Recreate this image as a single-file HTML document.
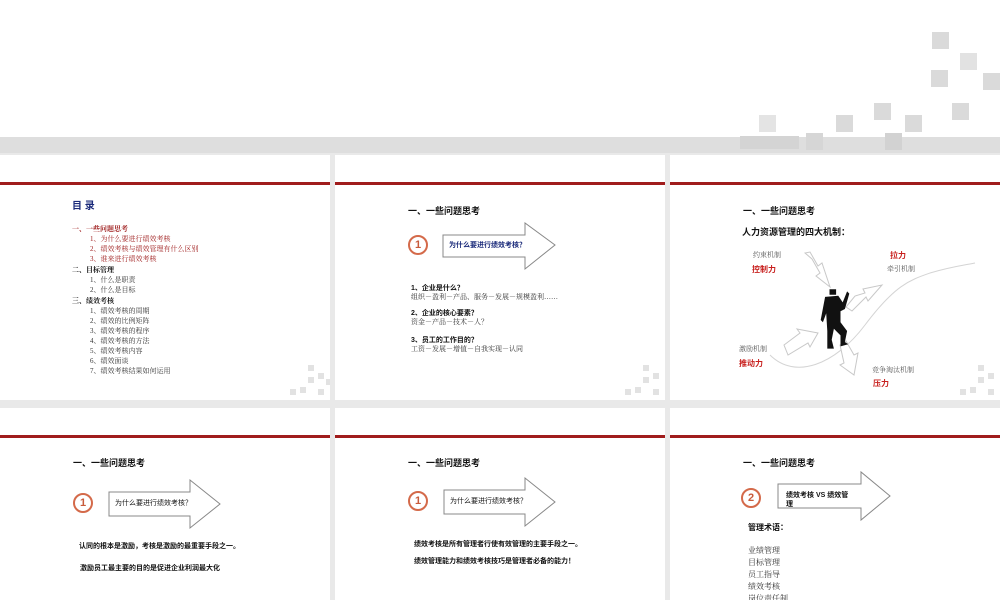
<!DOCTYPE html>
<html><head><meta charset="utf-8"><style>
*{margin:0;padding:0;box-sizing:border-box}
body{width:1000px;height:600px;overflow:hidden;background:#e9e9e9;position:relative;font-family:"Liberation Sans","Noto Sans CJK SC",sans-serif}
.a{position:absolute;white-space:nowrap;line-height:1}
.top{position:absolute;left:0;top:0;width:1000px;height:137px;background:#fff}
.band{position:absolute;left:0;top:137px;width:1000px;height:16px;background:#dedede}
.sl{position:absolute;background:#fff;overflow:hidden}
.red{position:absolute;left:0;width:100%;height:3px;background:#a01c1c}
.sq{position:absolute;width:17px;height:17px;background:#dadada}
.sm{position:absolute;width:6px;height:6px;background:#e2e2e2}
.h{font-weight:bold;font-size:9px;color:#111}
.s{font-family:"Liberation Serif","Noto Serif CJK SC",serif;font-size:7px;color:#333}
.b{font-weight:bold;font-size:7px;color:#111}
.r{color:#c8201e;font-weight:bold;font-size:8px}
.circ{position:absolute;width:20px;height:20px;border:2px solid #d46a4a;border-radius:50%;color:#c85a3a;font-weight:bold;font-size:11px;text-align:center;line-height:16px}
</style></head><body>
<div class="top"></div>
<div class="band"></div>
<div style="position:absolute;left:740px;top:136px;width:59px;height:13px;background:#d4d4d4"></div>
<div class="sq" style="left:932px;top:32px"></div>
<div class="sq" style="left:960px;top:53px;background:#e2e2e2"></div>
<div class="sq" style="left:931px;top:70px"></div>
<div class="sq" style="left:983px;top:73px"></div>
<div class="sq" style="left:874px;top:103px"></div>
<div class="sq" style="left:952px;top:103px"></div>
<div class="sq" style="left:759px;top:115px;background:#e4e4e4"></div>
<div class="sq" style="left:836px;top:115px"></div>
<div class="sq" style="left:905px;top:115px"></div>
<div class="sq" style="left:806px;top:133px;background:#d6d6d6"></div>
<div class="sq" style="left:885px;top:133px;background:#d2d2d2"></div>

<!-- slide 1 -->
<div class="sl" style="left:0;top:155px;width:330px;height:245px">
<div class="red" style="top:27px"></div>
<div class="a" style="left:72px;top:47px;font-weight:bold;font-size:10px;color:#1a2a7a">目 录</div>
<div class="a s" style="left:72px;top:71px;color:#a02020;font-weight:bold">一、一些问题思考</div>
<div class="a s" style="left:90px;top:81px;color:#a02020">1、为什么要进行绩效考核</div>
<div class="a s" style="left:90px;top:91px;color:#a02020">2、绩效考核与绩效管理有什么区别</div>
<div class="a s" style="left:90px;top:101px;color:#a02020">3、谁来进行绩效考核</div>
<div class="a s" style="left:72px;top:112px;font-weight:bold;color:#111">二、目标管理</div>
<div class="a s" style="left:90px;top:122px">1、什么是职责</div>
<div class="a s" style="left:90px;top:132px">2、什么是目标</div>
<div class="a s" style="left:72px;top:143px;font-weight:bold;color:#111">三、绩效考核</div>
<div class="a s" style="left:90px;top:153px">1、绩效考核的周期</div>
<div class="a s" style="left:90px;top:163px">2、绩效的比例矩阵</div>
<div class="a s" style="left:90px;top:173px">3、绩效考核的程序</div>
<div class="a s" style="left:90px;top:183px">4、绩效考核的方法</div>
<div class="a s" style="left:90px;top:193px">5、绩效考核内容</div>
<div class="a s" style="left:90px;top:203px">6、绩效面谈</div>
<div class="a s" style="left:90px;top:213px">7、绩效考核结果如何运用</div>
<div class="sm" style="left:308px;top:210px"></div><div class="sm" style="left:318px;top:218px"></div><div class="sm" style="left:308px;top:222px"></div><div class="sm" style="left:326px;top:224px"></div><div class="sm" style="left:290px;top:234px"></div><div class="sm" style="left:300px;top:232px"></div><div class="sm" style="left:318px;top:234px"></div>
</div>

<!-- slide 2 -->
<div class="sl" style="left:335px;top:155px;width:330px;height:245px">
<div class="red" style="top:27px"></div>
<div class="a h" style="left:73px;top:52px">一、一些问题思考</div>
<div class="circ" style="left:73px;top:80px">1</div>
<svg style="position:absolute;left:0;top:0" width="330" height="245"><polygon points="108,80 190,80 190,68 220,90 190,114 190,102 108,102" fill="#fff" stroke="#888" stroke-width="1"/></svg>
<div class="a b" style="left:114px;top:87px;color:#1a2a7a">为什么要进行绩效考核？</div>
<div class="a b" style="left:76px;top:130px">1、企业是什么？</div>
<div class="a s" style="left:76px;top:139px">组织－盈利－产品、服务－发展－规模盈利……</div>
<div class="a b" style="left:76px;top:155px">2、企业的核心要素？</div>
<div class="a s" style="left:76px;top:164px">资金－产品－技术－人？</div>
<div class="a b" style="left:76px;top:182px">3、员工的工作目的？</div>
<div class="a s" style="left:76px;top:191px">工资－发展－增值－自我实现－认同</div>
<div class="sm" style="left:308px;top:210px"></div><div class="sm" style="left:318px;top:218px"></div><div class="sm" style="left:308px;top:222px"></div><div class="sm" style="left:290px;top:234px"></div><div class="sm" style="left:300px;top:232px"></div><div class="sm" style="left:318px;top:234px"></div>
</div>

<!-- slide 3 -->
<div class="sl" style="left:670px;top:155px;width:330px;height:245px">
<div class="red" style="top:27px"></div>
<div class="a h" style="left:73px;top:52px">一、一些问题思考</div>
<div class="a h" style="left:72px;top:73px">人力资源管理的四大机制：</div>
<svg style="position:absolute;left:0;top:0" width="330" height="245" fill="none" stroke="#d4d4d4" stroke-width="1">
<path d="M100,200 C125,225 165,210 195,170 C225,130 240,125 260,118 C280,112 295,110 305,108"/>
<g fill="#fff" stroke="#c8c8c8">
<polygon points="135,98 142,104 150,118 146,121 160,132 152,108 148,111 140,97"/>
<polygon points="176,152 185,141 195,138 193,134 212,130 198,146 196,142 182,156"/>
<polygon points="118,200 114,190 130,178 127,174 148,178 140,192 138,188"/>
<polygon points="170,190 176,186 184,200 188,198 184,220 170,210 174,208"/>
</g>
</svg>
<svg style="position:absolute;left:148px;top:132px" width="34" height="66" viewBox="0 0 30 60"><path d="M10,2 h6 v5 h-6z M6,9 L18,8 L22,14 L26,4 L28,6 L24,20 L20,22 L20,32 L26,40 L24,50 L27,52 L20,54 L20,44 L14,38 L12,48 L14,56 L8,56 L8,40 L7,24 L4,32 L2,30 Z" fill="#111"/></svg>
<div class="a s" style="left:83px;top:97px;color:#555">约束机制</div>
<div class="a r" style="left:82px;top:111px">控制力</div>
<div class="a r" style="left:220px;top:97px">拉力</div>
<div class="a s" style="left:217px;top:111px;color:#555">牵引机制</div>
<div class="a s" style="left:69px;top:191px;color:#555">激励机制</div>
<div class="a r" style="left:69px;top:205px">推动力</div>
<div class="a s" style="left:202px;top:212px;color:#555">竞争淘汰机制</div>
<div class="a r" style="left:203px;top:225px">压力</div>
<div class="sm" style="left:308px;top:210px"></div><div class="sm" style="left:318px;top:218px"></div><div class="sm" style="left:308px;top:222px"></div><div class="sm" style="left:290px;top:234px"></div><div class="sm" style="left:300px;top:232px"></div><div class="sm" style="left:318px;top:234px"></div>
</div>

<!-- slide 4 -->
<div class="sl" style="left:0;top:408px;width:330px;height:192px">
<div class="red" style="top:27px"></div>
<div class="a h" style="left:73px;top:51px">一、一些问题思考</div>
<div class="circ" style="left:73px;top:85px">1</div>
<svg style="position:absolute;left:0;top:0" width="330" height="192"><polygon points="109,84 190,84 190,72 220,96 190,120 190,108 109,108" fill="#fff" stroke="#888"/></svg>
<div class="a b" style="left:115px;top:92px;font-weight:normal">为什么要进行绩效考核？</div>
<div class="a b" style="left:79px;top:135px">认同的根本是激励，考核是激励的最重要手段之一。</div>
<div class="a b" style="left:80px;top:157px">激励员工最主要的目的是促进企业利润最大化</div>
</div>

<!-- slide 5 -->
<div class="sl" style="left:335px;top:408px;width:330px;height:192px">
<div class="red" style="top:27px"></div>
<div class="a h" style="left:73px;top:51px">一、一些问题思考</div>
<div class="circ" style="left:73px;top:83px">1</div>
<svg style="position:absolute;left:0;top:0" width="330" height="192"><polygon points="109,82 190,82 190,70 220,94 190,118 190,106 109,106" fill="#fff" stroke="#888"/></svg>
<div class="a b" style="left:115px;top:90px;font-weight:normal">为什么要进行绩效考核？</div>
<div class="a b" style="left:79px;top:133px">绩效考核是所有管理者行使有效管理的主要手段之一。</div>
<div class="a b" style="left:79px;top:150px">绩效管理能力和绩效考核技巧是管理者必备的能力！</div>
</div>

<!-- slide 6 -->
<div class="sl" style="left:670px;top:408px;width:330px;height:192px">
<div class="red" style="top:27px"></div>
<div class="a h" style="left:73px;top:51px">一、一些问题思考</div>
<div class="circ" style="left:71px;top:80px">2</div>
<svg style="position:absolute;left:0;top:0" width="330" height="192"><polygon points="108,76 191,76 191,64 220,88 191,112 191,100 108,100" fill="#fff" stroke="#888"/></svg>
<div class="a b" style="left:116px;top:84px">绩效考核 VS 绩效管</div>
<div class="a b" style="left:116px;top:93px">理</div>
<div class="a h" style="left:78px;top:116px;font-size:8px">管理术语：</div>
<div class="a s" style="left:78px;top:139px;font-size:8px">业绩管理</div>
<div class="a s" style="left:78px;top:151px;font-size:8px">目标管理</div>
<div class="a s" style="left:78px;top:163px;font-size:8px">员工指导</div>
<div class="a s" style="left:78px;top:175px;font-size:8px">绩效考核</div>
<div class="a s" style="left:78px;top:187px;font-size:8px">岗位责任制</div>
</div>
</body></html>
